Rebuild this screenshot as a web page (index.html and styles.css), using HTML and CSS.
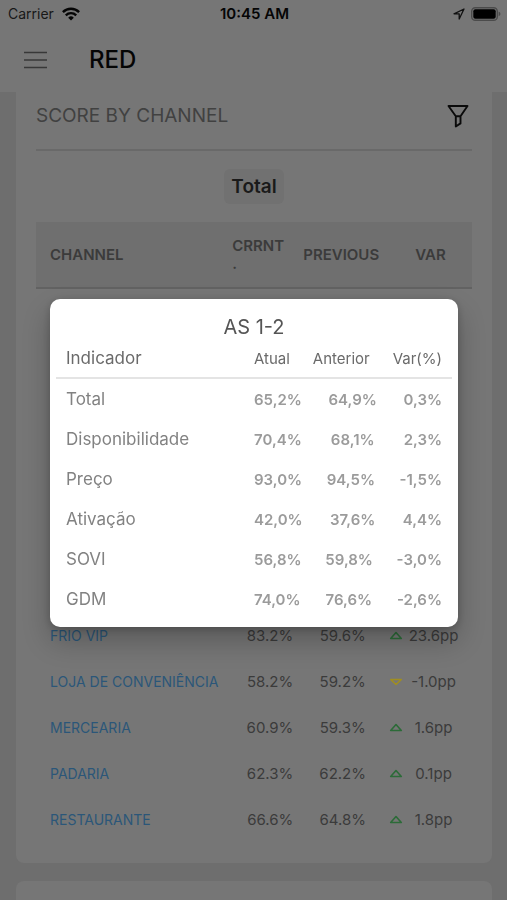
FILE: index.html
```html
<!DOCTYPE html>
<html lang="pt">
<head>
<meta charset="utf-8">
<meta name="viewport" content="width=device-width, initial-scale=1">
<title>RED</title>
<link rel="stylesheet" href="styles.css">
</head>
<body>
<div class="app">
  <header class="top">
    <div class="status">
      <div class="carrier">
        <span>Carrier</span>
        <svg width="18" height="14" viewBox="0 0 18 14" fill="none" stroke="#050505" stroke-width="2.4" aria-hidden="true">
          <path d="M.9 5.1a11.6 11.6 0 0 1 16.2 0M3.8 8.3a7.4 7.4 0 0 1 10.4 0"/>
          <path d="M9 13.6 6.2 10.7a4 4 0 0 1 5.6 0z" fill="#050505" stroke="none"/>
        </svg>
      </div>
      <strong class="clock">10:45 AM</strong>
      <div class="indicators">
        <svg width="12" height="12" viewBox="0 0 12 12" fill="none" stroke="#111" stroke-width="1.3" stroke-linejoin="round" aria-hidden="true">
          <path d="M11 1 1 5.8h5.2V11z"/>
        </svg>
        <svg width="30" height="14" viewBox="0 0 30 14" aria-hidden="true">
          <rect x=".7" y=".7" width="25.6" height="12.6" rx="3.6" fill="none" stroke="#4b4b4b" stroke-width="1.4"/>
          <rect x="2.3" y="2.3" width="22.4" height="9.4" rx="2" fill="#000"/>
          <path d="M27.6 4.8c2.4.6 2.4 3.8 0 4.4z" fill="#4b4b4b"/>
        </svg>
      </div>
    </div>
    <div class="nav">
      <button class="icon-button" type="button" aria-label="Menu">
        <svg width="23" height="18" viewBox="0 0 23 18" stroke="#383838" stroke-width="1.6" aria-hidden="true">
          <path d="M0 1.500h23M0 9h23M0 16.500h23"/>
        </svg>
      </button>
      <h1>RED</h1>
    </div>
  </header>

  <main class="content">
    <section class="card score">
      <div class="card-head">
        <h2>SCORE BY CHANNEL</h2>
        <button class="icon-button" type="button" aria-label="Filter">
          <svg width="22" height="24" viewBox="0 0 22 24" fill="none" stroke="#0a0a0a" stroke-width="1.9" stroke-linejoin="round" aria-hidden="true">
            <path d="M1.500 2h19L13.500 12.200v7.200L8.800 22.500V12.200zM8.800 12.200h4.700"/>
          </svg>
        </button>
      </div>
      <div class="filter-row"><button class="chip" type="button">Total</button></div>
      <table class="channels">
        <thead>
          <tr><th>CHANNEL</th><th class="current">CRRNT<br>.</th><th>PREVIOUS</th><th>VAR</th></tr>
        </thead>
        <tbody>
          <tr class="covered"><td colspan="4"></td></tr>
          <tr><td><a href="#frio">FRIO VIP</a></td><td>83.2%</td><td>59.6%</td><td><div class="var"><svg class="up" viewBox="0 0 14 9" aria-hidden="true"><path d="M7 1.500 12.300 7.500H1.700z"/></svg><span>23.6pp</span></div></td></tr>
          <tr><td><a href="#loja">LOJA DE CONVENIÊNCIA</a></td><td>58.2%</td><td>59.2%</td><td><div class="var"><svg class="down" viewBox="0 0 14 9" aria-hidden="true"><path d="M7 7.500 12.300 2.500H1.700z"/></svg><span>-1.0pp</span></div></td></tr>
          <tr><td><a href="#mercearia">MERCEARIA</a></td><td>60.9%</td><td>59.3%</td><td><div class="var"><svg class="up" viewBox="0 0 14 9" aria-hidden="true"><path d="M7 1.500 12.300 7.500H1.700z"/></svg><span>1.6pp</span></div></td></tr>
          <tr><td><a href="#padaria">PADARIA</a></td><td>62.3%</td><td>62.2%</td><td><div class="var"><svg class="up" viewBox="0 0 14 9" aria-hidden="true"><path d="M7 1.500 12.300 7.500H1.700z"/></svg><span>0.1pp</span></div></td></tr>
          <tr><td><a href="#restaurante">RESTAURANTE</a></td><td>66.6%</td><td>64.8%</td><td><div class="var"><svg class="up" viewBox="0 0 14 9" aria-hidden="true"><path d="M7 1.500 12.300 7.500H1.700z"/></svg><span>1.8pp</span></div></td></tr>
        </tbody>
      </table>
    </section>
    <section class="card next"></section>
  </main>
</div>

<div class="overlay">
  <div class="modal" role="dialog" aria-modal="true" aria-labelledby="modal-title">
    <h2 id="modal-title">AS 1-2</h2>
    <table class="detail">
      <thead>
        <tr><th>Indicador</th><th>Atual</th><th>Anterior</th><th>Var(%)</th></tr>
      </thead>
      <tbody>
        <tr><th>Total</th><td>65,2%</td><td>64,9%</td><td>0,3%</td></tr>
        <tr><th>Disponibilidade</th><td>70,4%</td><td>68,1%</td><td>2,3%</td></tr>
        <tr><th>Preço</th><td>93,0%</td><td>94,5%</td><td>-1,5%</td></tr>
        <tr><th>Ativação</th><td>42,0%</td><td>37,6%</td><td>4,4%</td></tr>
        <tr><th>SOVI</th><td>56,8%</td><td>59,8%</td><td>-3,0%</td></tr>
        <tr><th>GDM</th><td>74,0%</td><td>76,6%</td><td>-2,6%</td></tr>
      </tbody>
    </table>
  </div>
</div>
</body>
</html>
```
FILE: styles.css
```css
* { box-sizing: border-box; }

body {
  margin: 0;
  font-family: Inter, "Liberation Sans", sans-serif;
  color: #3b3b3b;
  background: #6e6e6e;
}

h1, h2 { margin: 0; font-weight: 400; }

.app {
  height: 100vh;
  display: flex;
  flex-direction: column;
  overflow: hidden;
}

.top { background: #767676; color: #050505; }

.status {
  display: grid;
  grid-template-columns: 1fr auto 1fr;
  align-items: center;
  height: 27px;
  padding: 0 6px 0 8px;
  font-size: 14px;
}
.carrier { display: flex; align-items: center; gap: 8px; color: #181818; }
.clock { font-weight: 600; font-size: 15px; }
.indicators { display: flex; justify-content: flex-end; align-items: center; gap: 6px; }

.nav {
  display: flex;
  align-items: center;
  gap: 42px;
  padding: 0 24px;
  height: 65px;
}
.nav h1 { font-size: 24px; line-height: 32px; font-weight: 500; }

.icon-button {
  display: flex;
  padding: 0;
  border: 0;
  background: none;
}

.content {
  flex: 1;
  display: flex;
  flex-direction: column;
  gap: 18px;
  padding: 0 15px 0 16px;
}

.card { background: #767676; border-radius: 8px; }
.score { padding: 0 20px 21px; border-radius: 0 0 8px 8px; }
.next { flex: 1; border-radius: 8px 8px 0 0; }

.card-head {
  display: flex;
  justify-content: space-between;
  align-items: center;
  height: 59px;
  padding: 0 3px 10px 0;
  border-bottom: 2px solid #696969;
}
.card-head h2 { font-size: 19px; line-height: 24px; color: #414141; }

.filter-row { display: flex; justify-content: center; padding: 18px 0; }
.chip {
  height: 35px;
  padding: 0 7px;
  border: 0;
  border-radius: 6px;
  background: #717171;
  color: #1a1a1a;
  font: 600 19px/24px Inter, sans-serif;
}

.channels {
  width: 100%;
  table-layout: fixed;
  border-collapse: collapse;
  font-size: 15px;
}
.channels th {
  height: 66px;
  padding: 0;
  border-bottom: 2px solid #626262;
  background: #6f6f6f;
  line-height: 18px;
  font-weight: 600;
  text-align: center;
}
.channels th:first-child { width: 45%; padding-left: 14px; text-align: left; }
.channels th.current { width: 14%; text-align: left; }
.channels th:nth-child(3) { width: 22%; }
.channels td { height: 46px; padding: 0; text-align: center; }
.channels td:first-child { padding-left: 14px; font-size: 14px; text-align: left; }
.channels td:nth-child(2) { text-align: right; }
.channels td:nth-child(3) { padding-left: 3px; }
.channels .covered td { height: 324px; }
.channels a { color: #2b5679; text-decoration: none; }

.var { display: flex; align-items: center; }
.var span { flex: 1; padding-right: 8px; }
.var svg { width: 14px; height: 9px; fill: none; stroke-width: 1.6; stroke-linejoin: round; }
.up { stroke: #2c6b38; }
.down { stroke: #a08e20; }

.overlay {
  position: fixed;
  inset: 0;
  display: flex;
  align-items: center;
  padding: 26px 49px 0 50px;
}
.modal {
  flex: 1;
  padding: 16px 6px 8px;
  border-radius: 10px;
  background: #fff;
  box-shadow: 0 14px 28px rgba(0, 0, 0, .24), 0 2px 8px rgba(0, 0, 0, .2);
}
.modal h2 {
  font-size: 20px;
  line-height: 24px;
  text-align: center;
  color: #555;
}

.detail { display: block; }
.detail thead, .detail tbody { display: block; }
.detail tr { display: flex; align-items: center; height: 40px; padding: 0 10px; }
.detail thead tr { border-bottom: 2px solid #e4e4e4; }
.detail th, .detail td { padding: 0; }
.detail th { font-weight: 400; font-size: 15px; color: #6a6a6a; }
.detail th:first-child { flex: 0 0 50%; font-size: 17px; text-align: left; }
.detail tbody th:first-child { color: #828282; }
.detail td { font-size: 15px; font-weight: 600; color: #9b9b9b; }
.detail tr > :nth-child(3) { margin: 0 auto; }
```
